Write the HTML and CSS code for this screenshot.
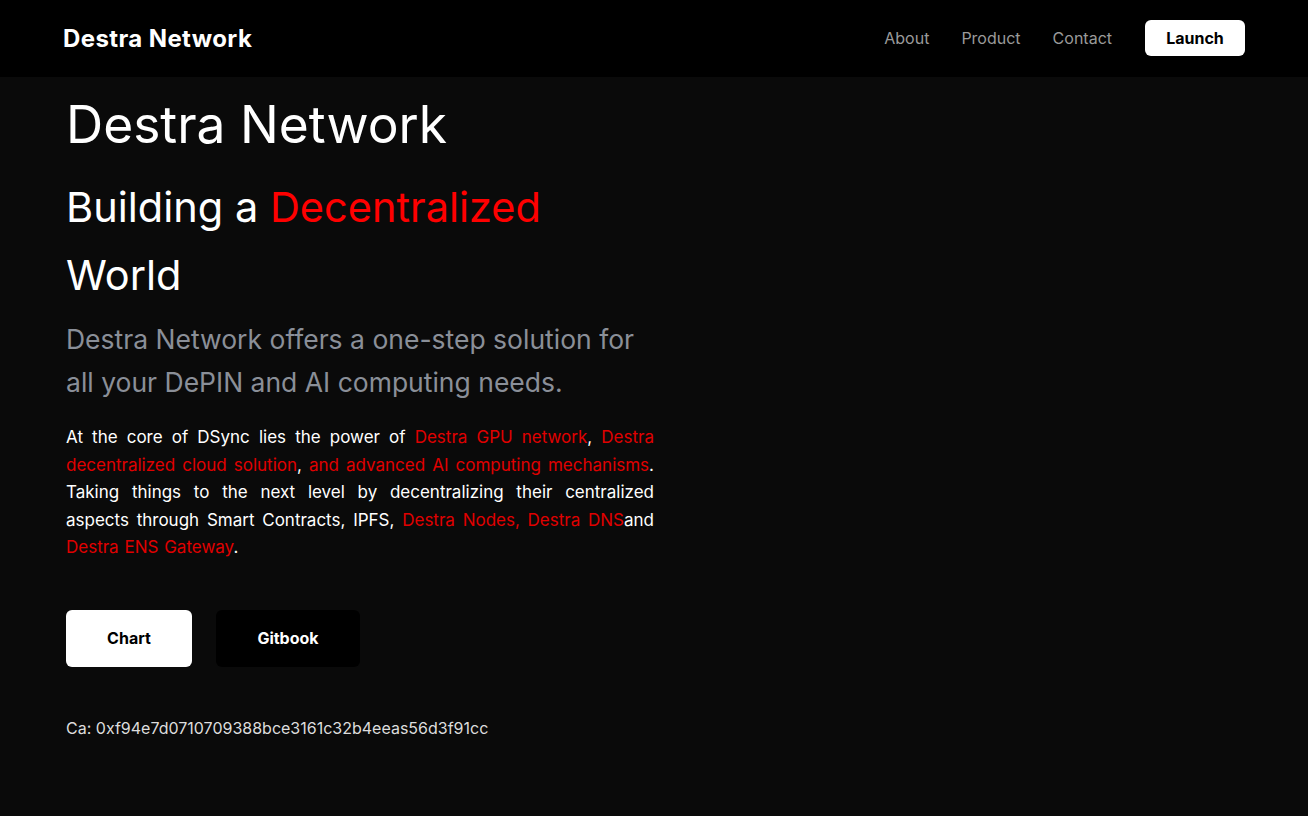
FILE: index.html
```html
<!DOCTYPE html>
<html lang="en">
<head>
<meta charset="utf-8">
<title>Destra Network</title>
<link rel="stylesheet" href="styles.css">
</head>
<body>
<header class="topbar">
  <div class="topbar-inner">
    <a class="logo" href="#">Destra Network</a>
    <nav class="nav">
      <a class="nav-link" href="#">About</a>
      <a class="nav-link" href="#">Product</a>
      <a class="nav-link" href="#">Contact</a>
      <a class="btn-launch" href="#">Launch</a>
    </nav>
  </div>
</header>
<main class="hero">
  <h1 class="hero-title">Destra Network</h1>
  <h2 class="hero-sub">Building a <span class="red">Decentralized</span><br>World</h2>
  <p class="hero-lead">Destra Network offers a one-step solution for all your DePIN and AI computing needs.</p>
  <p class="hero-text">At the core of DSync lies the power of <span class="red2">Destra GPU network</span>, <span class="red2">Destra decentralized cloud solution</span>, <span class="red2">and advanced AI computing mechanisms</span>. Taking things to the next level by decentralizing their centralized aspects through Smart Contracts, IPFS, <span class="red2">Destra Nodes, Destra DNS</span>and <span class="red2">Destra ENS Gateway</span>.</p>
  <div class="actions">
    <a class="btn btn-light" href="#">Chart</a>
    <a class="btn btn-dark" href="#">Gitbook</a>
  </div>
  <p class="ca">Ca: 0xf94e7d0710709388bce3161c32b4eeas56d3f91cc</p>
</main>
</body>
</html>
```

FILE: styles.css
```css
* { box-sizing: border-box; }
html, body { margin: 0; padding: 0; }
body {
  background: #0a0a0a;
  color: #fff;
  font-family: Inter, "Noto Sans", sans-serif;
  min-height: 816px;
}
a { text-decoration: none; color: inherit; }
.topbar {
  background: #000;
  height: 77px;
}
.topbar-inner {
  height: 100%;
  padding: 0 63px 1px 63px;
  display: flex;
  align-items: center;
  justify-content: space-between;
}
.logo {
  font-weight: 700;
  font-size: 24px;
  letter-spacing: 0.4px;
  color: #fff;
}
.nav {
  display: flex;
  align-items: center;
  gap: 32px;
}
.nav-link {
  color: #9a9a9a;
  font-size: 16px;
}
.btn-launch {
  margin-left: 1px;
  background: #fff;
  color: #000;
  font-weight: 700;
  font-size: 16px;
  border-radius: 6px;
  width: 100px;
  height: 36px;
  display: flex;
  align-items: center;
  justify-content: center;
}
.hero {
  padding: 11px 64px 40px 66px;
  max-width: 720px;
}
.hero-title {
  margin: 0;
  font-size: 51.5px;
  font-weight: 400;
  line-height: 72px;
}
.hero-sub {
  margin: 13px 0 0;
  font-size: 41.5px;
  font-weight: 400;
  line-height: 68px;
}
.red { color: #ff0000; }
.red2 { color: #e00000; }
.hero-lead {
  margin: 9px 0 0;
  font-size: 26.5px;
  line-height: 43px;
  color: #8a8f98;
  max-width: 600px;
}
.hero-text {
  margin: 20px 0 0;
  font-size: 17px;
  word-spacing: 1px;
  line-height: 27.5px;
  text-align: justify;
  width: 588px;
  color: #fff;
}
.actions {
  display: flex;
  gap: 24px;
  margin-top: 48px;
}
.btn {
  height: 57px;
  display: flex;
  align-items: center;
  justify-content: center;
  border-radius: 6px;
  font-weight: 700;
  font-size: 16px;
}
.btn-light { background: #fff; color: #000; width: 126px; }
.btn-dark { background: #000; color: #fff; width: 144px; }
.ca {
  margin: 51px 0 0;
  font-size: 16px;
  color: #ddd;
}
```
